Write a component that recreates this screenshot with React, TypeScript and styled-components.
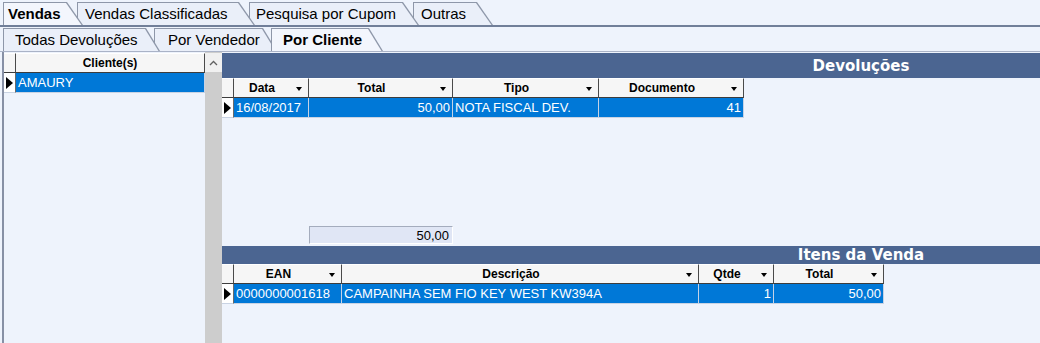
import styled, { createGlobalStyle } from 'styled-components';

const GlobalStyle = createGlobalStyle`
  html, body {
    margin: 0;
    padding: 0;
  }
  body {
    background: #eef3fc;
    font-family: "Liberation Sans", Arial, sans-serif;
    overflow: hidden;
  }
`;

const Screen = styled.div`
  width: 1040px;
  height: 343px;
  display: flex;
  flex-direction: column;
  background: #eef3fc;
  overflow: hidden;
`;

const TabStrip = styled.div<{ $h: number; $line: string }>`
  display: flex;
  align-items: flex-end;
  flex-shrink: 0;
  height: ${(p) => p.$h}px;
  padding-left: 3px;
  border-bottom: ${(p) => p.$line};
`;

const Tab = styled.div<{
  $w: number;
  $pad: number;
  $slant: number;
  $z: number;
  $active?: boolean;
}>`
  position: relative;
  flex-shrink: 0;
  box-sizing: border-box;
  width: ${(p) => p.$w}px;
  height: 23px;
  margin-left: -6px;
  padding-left: ${(p) => p.$pad}px;
  display: flex;
  align-items: center;
  font-size: 15px;
  font-weight: ${(p) => (p.$active ? 700 : 400)};
  color: #000;
  background: #8e97a9;
  clip-path: polygon(0 0, calc(100% - ${(p) => p.$slant}px) 0, 100% 100%, 0 100%);
  z-index: ${(p) => (p.$active ? 20 : p.$z)};

  &:first-child {
    margin-left: 0;
  }

  &::before {
    content: '';
    position: absolute;
    inset: 1px 0 0 1px;
    background: ${(p) => (p.$active ? '#f3f6fd' : '#eaeff9')};
    clip-path: polygon(
      0 0,
      calc(100% - ${(p) => p.$slant + 1}px) 0,
      calc(100% - 1.5px) 100%,
      0 100%
    );
  }
`;

const TabLabel = styled.span`
  position: relative;
  white-space: nowrap;
`;

const Body = styled.div`
  flex: 1;
  display: flex;
  min-height: 0;
  padding-left: 2px;
`;

const ClientPanel = styled.div`
  flex-shrink: 0;
  width: 218px;
  display: flex;
  border-left: 2px solid #8790a5;
`;

const ClientGrid = styled.div`
  flex: 1;
  padding-top: 1px;
`;

const ScrollTrack = styled.div`
  width: 17px;
  background: #cdcdcd;
  display: flex;
  flex-direction: column;
`;

const ScrollButton = styled.div`
  height: 19px;
  margin-top: 1px;
  background: #f0f0f0;
  display: flex;
  align-items: center;
  justify-content: center;
`;

const MainPanel = styled.div`
  flex: 1;
  min-width: 0;
  display: flex;
  flex-direction: column;
  padding-top: 1px;
`;

const SectionBar = styled.div<{ $h: number; $mt?: number }>`
  flex-shrink: 0;
  height: ${(p) => p.$h}px;
  margin-top: ${(p) => p.$mt ?? 0}px;
  padding-left: 460px;
  background: #4b6591;
  color: #fff;
  display: flex;
  align-items: center;
  justify-content: center;
  font-family: "DejaVu Sans", Verdana, sans-serif;
  font-weight: 700;
  font-size: 15px;
  white-space: nowrap;
`;

const DataGrid = styled.div<{ $cols: string }>`
  display: grid;
  grid-template-columns: ${(p) => p.$cols};
  width: max-content;
`;

const HeaderCell = styled.div<{ $arrow?: boolean }>`
  position: relative;
  box-sizing: border-box;
  height: 20px;
  padding-right: ${(p) => (p.$arrow ? 18 : 0)}px;
  background: #f6f6f6;
  border-top: 1px solid #fff;
  border-right: 1px solid #4a4a4a;
  border-bottom: 1px solid #3c3c3c;
  display: flex;
  align-items: center;
  justify-content: center;
  font-size: 12px;
  font-weight: 700;
  color: #000;
  white-space: nowrap;
`;

const SortArrow = styled.span`
  position: absolute;
  right: 6px;
  top: 8px;
  width: 0;
  height: 0;
  border-left: 3.5px solid transparent;
  border-right: 3.5px solid transparent;
  border-top: 4px solid #000;
`;

const RowIndicator = styled.div`
  box-sizing: border-box;
  height: 20px;
  background: #fff;
  border-right: 1px solid #6a6a6a;
  border-bottom: 1px solid #c9d3e3;
  display: flex;
  align-items: center;
  padding-left: 2px;

  &::after {
    content: '';
    width: 0;
    height: 0;
    border-top: 6px solid transparent;
    border-bottom: 6px solid transparent;
    border-left: 7px solid #000;
  }
`;

const RowCell = styled.div<{ $align?: 'left' | 'right' }>`
  box-sizing: border-box;
  height: 20px;
  padding: 0 2px;
  background: #0078d7;
  color: #fff;
  border-right: 1px solid #c5d2e6;
  border-bottom: 1px solid #c9d3e3;
  display: flex;
  align-items: center;
  justify-content: ${(p) => (p.$align === 'right' ? 'flex-end' : 'flex-start')};
  font-size: 13px;
  white-space: nowrap;
  overflow: hidden;
`;

const SummaryRow = styled.div`
  display: flex;
  margin-top: 108px;
  padding-left: 87px;
`;

const SummaryBox = styled.div`
  box-sizing: border-box;
  width: 144px;
  height: 18px;
  padding-right: 3px;
  background: #e0e6f5;
  border: 1px solid;
  border-color: #a4acbd #fff #fff #a4acbd;
  display: flex;
  align-items: center;
  justify-content: flex-end;
  font-size: 13px;
  color: #000;
`;

type Column = { title: string; width: number; align?: 'left' | 'right' };

const devolucoesCols: Column[] = [
  { title: 'Data', width: 75 },
  { title: 'Total', width: 144, align: 'right' },
  { title: 'Tipo', width: 146 },
  { title: 'Documento', width: 145, align: 'right' },
];
const devolucoesRow = ['16/08/2017', '50,00', 'NOTA FISCAL DEV.', '41'];

const itensCols: Column[] = [
  { title: 'EAN', width: 108 },
  { title: 'Descrição', width: 357 },
  { title: 'Qtde', width: 75, align: 'right' },
  { title: 'Total', width: 110, align: 'right' },
];
const itensRow = ['0000000001618', 'CAMPAINHA SEM FIO KEY WEST KW394A', '1', '50,00'];

function Grid({ cols, row }: { cols: Column[]; row: string[] }) {
  const template = ['12px', ...cols.map((c) => `${c.width}px`)].join(' ');
  return (
    <DataGrid $cols={template}>
      <HeaderCell />
      {cols.map((c) => (
        <HeaderCell key={c.title} $arrow>
          {c.title}
          <SortArrow />
        </HeaderCell>
      ))}
      <RowIndicator />
      {cols.map((c, i) => (
        <RowCell key={c.title} $align={c.align}>
          {row[i]}
        </RowCell>
      ))}
    </DataGrid>
  );
}

const mainTabs = [
  { label: 'Vendas', w: 80, pad: 5, active: true },
  { label: 'Vendas Classificadas', w: 178, pad: 8 },
  { label: 'Pesquisa por Cupom', w: 170, pad: 7 },
  { label: 'Outras', w: 80, pad: 8 },
];

const subTabs = [
  { label: 'Todas Devoluções', w: 157, pad: 12 },
  { label: 'Por Vendedor', w: 123, pad: 14 },
  { label: 'Por Cliente', w: 112, pad: 12, active: true },
];

export default function App() {
  return (
    <>
      <GlobalStyle />
      <Screen>
        <TabStrip $h={25} $line="2px solid #717f99">
          {mainTabs.map((t, i) => (
            <Tab key={t.label} $w={t.w} $pad={t.pad} $slant={16} $z={10 - i} $active={t.active}>
              <TabLabel>{t.label}</TabLabel>
            </Tab>
          ))}
        </TabStrip>
        <TabStrip $h={24} $line="1px solid #aab3c7">
          {subTabs.map((t, i) => (
            <Tab key={t.label} $w={t.w} $pad={t.pad} $slant={14} $z={10 - i} $active={t.active}>
              <TabLabel>{t.label}</TabLabel>
            </Tab>
          ))}
        </TabStrip>
        <Body>
          <ClientPanel>
            <ClientGrid>
              <DataGrid $cols="12px 189px">
                <HeaderCell />
                <HeaderCell>Cliente(s)</HeaderCell>
                <RowIndicator />
                <RowCell>AMAURY</RowCell>
              </DataGrid>
            </ClientGrid>
            <ScrollTrack>
              <ScrollButton>
                <svg width="9" height="6" viewBox="0 0 9 6">
                  <polyline points="1,5 4.5,1.5 8,5" fill="none" stroke="#606060" strokeWidth="1.3" />
                </svg>
              </ScrollButton>
            </ScrollTrack>
          </ClientPanel>
          <MainPanel>
            <SectionBar $h={25}>Devoluções</SectionBar>
            <Grid cols={devolucoesCols} row={devolucoesRow} />
            <SummaryRow>
              <SummaryBox>50,00</SummaryBox>
            </SummaryRow>
            <SectionBar $h={18} $mt={2}>
              Itens da Venda
            </SectionBar>
            <Grid cols={itensCols} row={itensRow} />
          </MainPanel>
        </Body>
      </Screen>
    </>
  );
}
